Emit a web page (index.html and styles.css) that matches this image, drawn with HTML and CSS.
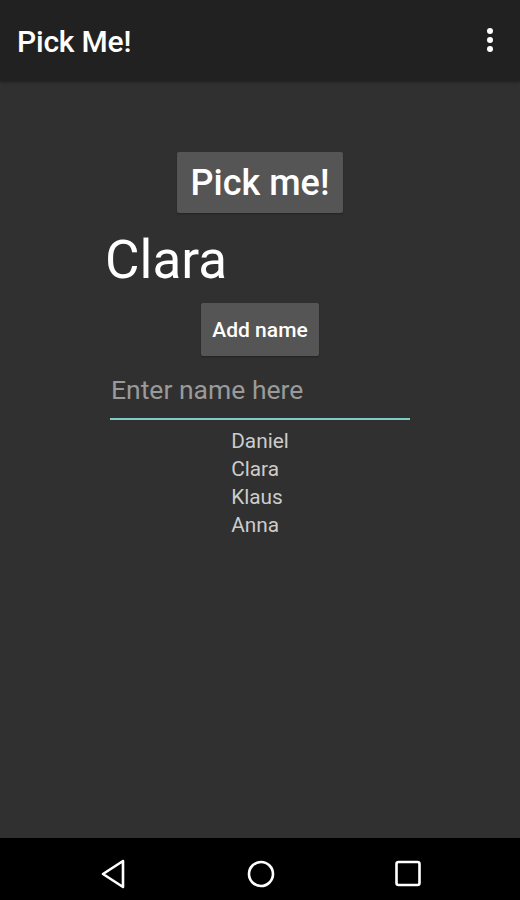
FILE: index.html
```html
<!DOCTYPE html>
<html lang="en">
<head>
    <meta charset="UTF-8">
    <meta name="viewport" content="width=device-width, initial-scale=1.0">
    <title>Pick Me!</title>
    <link rel="stylesheet" href="styles.css">
</head>
<body>
    <div class="Screen">
        <!-- Barra de titulo -->
        <div class="AppBar">
            <span class="AppTitle">Pick Me!</span>
            <span class="MenuDots"><i></i><i></i><i></i></span>
        </div>

        <div class="Content">
            <button type="button" class="PickButton">Pick me!</button>
            <div class="PickedName">Clara</div>
            <button type="button" class="AddButton">Add name</button>
            <div class="NameField">
                <input type="text" placeholder="Enter name here">
            </div>
            <ul class="NameList">
                <li>Daniel</li>
                <li>Clara</li>
                <li>Klaus</li>
                <li>Anna</li>
            </ul>
        </div>

        <!-- Barra de navegacao -->
        <div class="NavBar">
            <svg width="28" height="30" viewBox="0 0 28 30"><path d="M24 2 L4 15 L24 28 Z" fill="none" stroke="#fff" stroke-width="2.6" stroke-linejoin="round"/></svg>
            <svg width="28" height="28" viewBox="0 0 28 28"><circle cx="14" cy="14" r="12" fill="none" stroke="#fff" stroke-width="2.6"/></svg>
            <svg width="26" height="28" viewBox="0 0 26 28"><rect x="1.5" y="2" width="23" height="23" rx="2" fill="none" stroke="#fff" stroke-width="2.6"/></svg>
        </div>
    </div>
</body>
</html>
```

FILE: styles.css
```css
body {
    margin: 0;
    background-color: #303030;
    font-family: Roboto, "Liberation Sans", Arial, sans-serif;
}

.Screen {
    width: 520px;
    height: 900px;
    display: flex;
    flex-direction: column;
}

/* Barra de titulo */
.AppBar {
    height: 81px;
    background-color: #212121;
    display: flex;
    align-items: center;
    justify-content: space-between;
    padding: 0 27px 0 17px;
    box-shadow: 0 1px 3px rgba(0, 0, 0, 0.4);
}

.AppTitle {
    color: #ffffff;
    font-size: 30px;
    font-weight: 500;
    margin-top: 2px;
    letter-spacing: -0.2px;
}

.MenuDots {
    display: flex;
    flex-direction: column;
    gap: 3px;
    margin-bottom: 2px;
}

.MenuDots i {
    width: 6px;
    height: 6px;
    border-radius: 50%;
    background-color: #ffffff;
}

/* Conteudo */
.Content {
    flex: 1;
    display: flex;
    flex-direction: column;
    align-items: center;
    padding-top: 71px;
}

.PickButton, .AddButton {
    border: none;
    border-radius: 2px;
    background-color: #555555;
    color: #ffffff;
    font-family: Roboto, "Liberation Sans", Arial, sans-serif;
    font-weight: 500;
    box-shadow: 0 1px 2px rgba(0, 0, 0, 0.3);
}

.PickButton {
    width: 166px;
    height: 61px;
    font-size: 36px;
    padding: 0;
}

.PickedName {
    align-self: flex-start;
    margin-left: 105px;
    margin-top: 15px;
    color: #ffffff;
    font-size: 53px;
    line-height: 64px;
}

.AddButton {
    width: 118px;
    height: 53px;
    margin-top: 11px;
    font-size: 21px;
    padding: 0;
}

.NameField {
    width: 300px;
    margin-top: 12px;
    border-bottom: 2px solid #80cbc4;
}

.NameField input {
    width: 100%;
    box-sizing: border-box;
    border: none;
    outline: none;
    background: transparent;
    padding: 0 0 8px 1px;
    height: 50px;
    font-family: Roboto, "Liberation Sans", Arial, sans-serif;
    font-size: 26.5px;
    color: #ffffff;
}

.NameField input::placeholder {
    color: #9a9a9a;
}

.NameList {
    list-style: none;
    margin: 7px 0 0 0;
    padding: 0;
    color: #cccccc;
    font-size: 20.8px;
    line-height: 28px;
}

/* Barra de navegacao */
.NavBar {
    height: 62px;
    background-color: #000000;
    display: flex;
    align-items: center;
    justify-content: center;
    gap: 120px;
    padding-top: 10px;
    box-sizing: border-box;
}
```
